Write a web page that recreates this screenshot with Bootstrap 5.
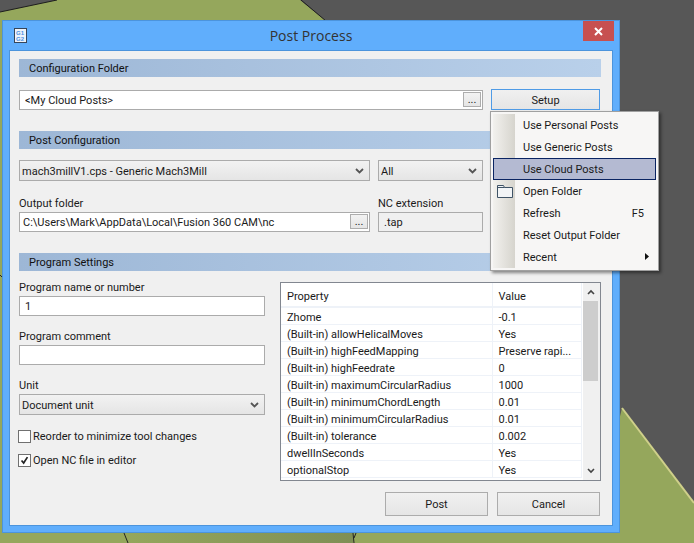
<!DOCTYPE html>
<html lang="en">
<head>
    <meta charset="UTF-8">
    <meta name="viewport" content="width=device-width, initial-scale=1.0">
    <title>Post Process</title>
    <link href="https://cdn.jsdelivr.net/npm/bootstrap@5.3.0/dist/css/bootstrap.min.css" rel="stylesheet">
    <style>
        html, body { width: 694px; height: 543px; overflow: hidden; margin: 0; }
        body { background: #575757; font-family: Roboto, sans-serif; font-size: 11px; color: #1a1a1a; line-height: 14px; }
        .scene { position: absolute; left: 0; top: 0; }

        .pp-window { position: absolute; left: 2px; top: 20px; width: 618px; height: 513px; background: #60aefc; border: 1px solid #4c94dc; }
        .pp-titlebar { height: 29px; }
        .pp-logo { position: absolute; left: 11px; top: 7px; }
        .pp-logo text { font-family: "Liberation Sans", sans-serif; font-size: 6px; font-weight: 700; fill: #4a90e2; }
        .pp-title { font-family: "Open Sans", sans-serif; font-size: 14px; color: #333; line-height: 29px; }
        .pp-close { position: absolute; right: 5px; top: 0; width: 31px; height: 20px; background: #c75050; border: 0; padding: 0; line-height: 0; }
        .pp-body { position: absolute; left: 6px; top: 29px; width: 604px; height: 476px; background: #f0f0f0; border: 1px solid #4c94dc; padding: 8px 11px 0 9px; }

        .pp-bar { height: 18px; line-height: 20px; padding-left: 10px; background: linear-gradient(90deg, #9db7d6, #b9d0ea); color: #111; }
        .pp-label { display: block; height: 14px; line-height: 16px; margin: 0; }

        .pp-input.form-control { height: 20px; border-radius: 0; border: 1px solid #ababab; padding: 1px 0 0 5px; font-size: 11px; line-height: 18px; color: #1a1a1a; background-color: #fff; min-height: 0; }
        .pp-input.pp-path.form-control { padding-left: 3px; }
        .pp-input.form-control:disabled { background-color: #f0f0f0; }
        .pp-select.form-select { height: 21px; border-radius: 0; border: 1px solid #ababab; padding: 1px 20px 0 2px; font-size: 11px; line-height: 19px; color: #1a1a1a;
            background-image: url("data:image/svg+xml,%3csvg xmlns='http://www.w3.org/2000/svg' viewBox='0 0 9 6'%3e%3cpath fill='none' stroke='%23555' stroke-width='1.8' d='M1 1l3.5 3.5L8 1'/%3e%3c/svg%3e"), linear-gradient(#f2f2f2, #e5e5e5);
            background-repeat: no-repeat; background-position: right 5px center, 0 0; background-size: 9px 6px, 100% 100%; }
        .pp-browse { position: absolute; right: 2px; top: 2px; width: 18px; height: 15px; border: 1px solid #adadad; background: linear-gradient(#f2f2f2, #e5e5e5); padding: 0; font-size: 11px; line-height: 10px; color: #222; border-radius: 0; }

        .pp-btn.btn { border-radius: 0; border: 1px solid #acacac; background: linear-gradient(#f0f0f0, #e5e5e5); color: #1a1a1a; font-size: 11px; padding: 2px 0 0; line-height: 14px; }
        .pp-setup.btn { width: 109px; height: 21px; border-color: #4f9be6; margin-left: 8px; margin-top: -1px; }
        .pp-post.btn { width: 103px; height: 24px; }

        .pp-field { position: relative; }
        .w-left { width: 351px; }
        .w-right { width: 105px; }
        .w-full { width: 464px; }
        .w-prog { width: 246px; }

        .pp-check { display: flex; align-items: center; margin: 0 0 0 -1px; padding: 0; min-height: 0; height: 14px; }
        .pp-check .form-check-input { float: none; flex-shrink: 0; margin: 0 2px 0 0; width: 13px; height: 13px; border: 1px solid #707070; border-radius: 0; background-color: #fff; }
        .pp-check .form-check-input:checked { background-color: #fff; border-color: #707070; background-image: url("data:image/svg+xml,%3csvg xmlns='http://www.w3.org/2000/svg' viewBox='0 0 13 13'%3e%3cpath fill='none' stroke='%23222' stroke-width='2' d='M3 6.5l2.5 3L10 2.5'/%3e%3c/svg%3e"); background-size: 100% 100%; }
        .pp-check .form-check-label { color: #1a1a1a; margin-top: 2px; }

        .pp-grid { position: relative; width: 321px; height: 199px; background: #fff; border: 1px solid #828790; margin-left: 15px; margin-top: 11px; overflow: hidden; }
        .pp-table.table { table-layout: fixed; width: 301px; margin: 0; font-size: 11px; color: #1a1a1a; --bs-table-color: #1a1a1a; --bs-table-bg: transparent; }
        .pp-table th, .pp-table td { height: 17px; padding: 3px 0 0 6px; border: 0; border-bottom: 1px solid #eef2f8; border-right: 1px solid #eef2f8; font-weight: 400; line-height: 13px; white-space: nowrap; overflow: hidden; vertical-align: top; }
        .pp-table th { height: 24px; padding-top: 7px; border-bottom-width: 2px; }
        .pp-scroll { position: absolute; right: 0; top: 0; width: 17px; height: 197px; background: #f0f0f0; }
        .pp-thumb { position: absolute; left: 0; top: 18px; width: 15px; height: 80px; background: #cdcdcd; }
        .pp-arrow { position: absolute; left: 4px; }

        .pp-menu.dropdown-menu { display: block; position: absolute; left: 490px; top: 111px; width: 169px; height: 160px; min-width: 0; margin: 0; padding: 2px; background: #f7f6f5; border: 1px solid #a0a0a0; border-radius: 0; box-shadow: 2px 2px 3px rgba(0,0,0,.45); font-size: 11px; }
        .pp-menu::before { content: ""; position: absolute; left: 2px; top: 2px; bottom: 2px; width: 22px; background: linear-gradient(90deg, #f2f1ee, #d6d4cd); }
        .pp-menu .dropdown-item { position: relative; display: flex; justify-content: space-between; height: 22px; padding: 0 11px 0 29px; line-height: 22px; border: 1px solid transparent; color: #1a1a1a; font-size: 11px; width: 163px; }
        .pp-menu .dropdown-item.active { background: #b4bad2; border-color: #0a2462; color: #1a1a1a; }
        .pp-folder { position: absolute; left: 3px; top: 3px; }
        .pp-sub { position: absolute; right: 6px; top: 6px; }
    </style>
</head>
<body>
    <!-- desktop behind the dialog -->
    <svg class="scene" width="694" height="543" viewBox="0 0 694 543">
        <defs>
            <linearGradient id="floorShade" x1="0" x2="1" y1="0" y2="0">
                <stop offset="0" stop-color="#95a75c"/>
                <stop offset="1" stop-color="#7f8f55"/>
            </linearGradient>
        </defs>
        <rect width="694" height="543" fill="#575757"/>
        <polygon points="0,12 57,0 300,0 326,21 0,60" fill="#95a75c"/>
        <rect x="0" y="12" width="10" height="531" fill="#95a75c"/>
        <polygon points="622,408 694,503 694,543 0,543 0,500 600,500" fill="#95a75c"/>
        <rect x="123" y="533" width="230" height="10" fill="url(#floorShade)"/>
        <path d="M0 12L57 0M301 0L326 21" stroke="#1d1d1d" fill="none"/>
        <path d="M622 408L694 503" stroke="#cfd08a" stroke-width="2" fill="none"/>
        <path d="M124 533L128 543M353 533L354 543M356 533L354 538M0 275L2 277" stroke="#222" fill="none"/>
    </svg>

    <div class="pp-window">
        <div class="pp-titlebar text-center">
            <svg class="pp-logo" width="13" height="15" viewBox="0 0 13 15">
                <rect x=".5" y=".5" width="12" height="14" fill="#eef3fa" stroke="#36465a"/>
                <text x="2" y="7">G1</text>
                <text x="2" y="13">G2</text>
            </svg>
            <span class="pp-title">Post Process</span>
            <button class="pp-close" type="button" aria-label="Close">
                <svg width="9" height="9" viewBox="0 0 9 9"><path d="M1 1l7 7M8 1L1 8" stroke="#fff" stroke-width="2"/></svg>
            </button>
        </div>

        <div class="pp-body">
            <div class="pp-bar">Configuration Folder</div>
            <div class="d-flex align-items-start sec-a" style="margin-top:13px">
                <div class="pp-field w-full">
                    <input class="form-control pp-input" value="&lt;My Cloud Posts&gt;">
                    <button class="pp-browse" type="button">...</button>
                </div>
                <button class="btn pp-btn pp-setup" type="button">Setup</button>
            </div>

            <div class="pp-bar" style="margin-top:21px">Post Configuration</div>
            <div class="d-flex gap-2" style="margin-top:11px">
                <select class="form-select pp-select w-left"><option>mach3millV1.cps - Generic Mach3Mill</option></select>
                <select class="form-select pp-select w-right"><option>All</option></select>
            </div>
            <div class="d-flex gap-2" style="margin-top:15px">
                <div class="pp-field w-left">
                    <label class="pp-label">Output folder</label>
                    <div class="pp-field" style="margin-top:2px">
                        <input class="form-control pp-input pp-path" value="C:\Users\Mark\AppData\Local\Fusion 360 CAM\nc">
                        <button class="pp-browse" type="button">...</button>
                    </div>
                </div>
                <div class="w-right">
                    <label class="pp-label">NC extension</label>
                    <input class="form-control pp-input" style="margin-top:2px" value=".tap" disabled>
                </div>
            </div>

            <div class="pp-bar" style="margin-top:21px">Program Settings</div>
            <div class="d-flex align-items-start">
                <div class="w-prog flex-shrink-0" style="padding-top:9px">
                    <label class="pp-label">Program name or number</label>
                    <input class="form-control pp-input" style="margin-top:2px" value="1">
                    <label class="pp-label" style="margin-top:13px">Program comment</label>
                    <input class="form-control pp-input" style="margin-top:2px">
                    <label class="pp-label" style="margin-top:13px">Unit</label>
                    <select class="form-select pp-select" style="margin-top:2px"><option>Document unit</option></select>
                    <div class="form-check pp-check" style="margin-top:14px">
                        <input class="form-check-input" type="checkbox" id="reorder">
                        <label class="form-check-label" for="reorder">Reorder to minimize tool changes</label>
                    </div>
                    <div class="form-check pp-check" style="margin-top:10px">
                        <input class="form-check-input" type="checkbox" id="openNc" checked>
                        <label class="form-check-label" for="openNc">Open NC file in editor</label>
                    </div>
                </div>
                <div class="pp-grid flex-shrink-0">
                    <table class="table pp-table">
                        <colgroup><col style="width:211px"><col></colgroup>
                        <thead><tr><th>Property</th><th>Value</th></tr></thead>
                        <tbody>
                            <tr><td>Zhome</td><td>-0.1</td></tr>
                            <tr><td>(Built-in) allowHelicalMoves</td><td>Yes</td></tr>
                            <tr><td>(Built-in) highFeedMapping</td><td>Preserve rapi...</td></tr>
                            <tr><td>(Built-in) highFeedrate</td><td>0</td></tr>
                            <tr><td>(Built-in) maximumCircularRadius</td><td>1000</td></tr>
                            <tr><td>(Built-in) minimumChordLength</td><td>0.01</td></tr>
                            <tr><td>(Built-in) minimumCircularRadius</td><td>0.01</td></tr>
                            <tr><td>(Built-in) tolerance</td><td>0.002</td></tr>
                            <tr><td>dwellInSeconds</td><td>Yes</td></tr>
                            <tr><td>optionalStop</td><td>Yes</td></tr>
                        </tbody>
                    </table>
                    <div class="pp-scroll">
                        <svg class="pp-arrow" style="top:6px" width="8" height="6" viewBox="0 0 8 6"><path d="M1 5l3-3 3 3" fill="none" stroke="#444" stroke-width="1.6"/></svg>
                        <div class="pp-thumb"></div>
                        <svg class="pp-arrow" style="top:185px" width="8" height="6" viewBox="0 0 8 6"><path d="M1 1l3 3 3-3" fill="none" stroke="#444" stroke-width="1.6"/></svg>
                    </div>
                </div>
            </div>
            <div class="d-flex justify-content-end gap-2" style="margin-top:11px;column-gap:9px!important;padding-right:1px">
                <button class="btn pp-btn pp-post" type="button">Post</button>
                <button class="btn pp-btn pp-post" type="button">Cancel</button>
            </div>
        </div>
    </div>

    <div class="dropdown-menu pp-menu">
        <a class="dropdown-item" href="#">Use Personal Posts</a>
        <a class="dropdown-item" href="#">Use Generic Posts</a>
        <a class="dropdown-item active" href="#">Use Cloud Posts</a>
        <a class="dropdown-item" href="#">
            <svg class="pp-folder" width="16" height="14" viewBox="0 0 16 14"><path d="M.5 13.5V1.5h6l1 2h8v10z" fill="#f2f4f6" stroke="#3f5366"/><path d="M.5 3.5h7" stroke="#3f5366"/></svg>
            Open Folder
        </a>
        <a class="dropdown-item" href="#">Refresh <span>F5</span></a>
        <a class="dropdown-item" href="#">Reset Output Folder</a>
        <a class="dropdown-item" href="#">Recent
            <svg class="pp-sub" width="4" height="7" viewBox="0 0 4 7"><path d="M0 0l4 3.5L0 7z" fill="#111"/></svg>
        </a>
    </div>

    <script src="https://cdn.jsdelivr.net/npm/bootstrap@5.3.0/dist/js/bootstrap.bundle.min.js"></script>
</body>
</html>
